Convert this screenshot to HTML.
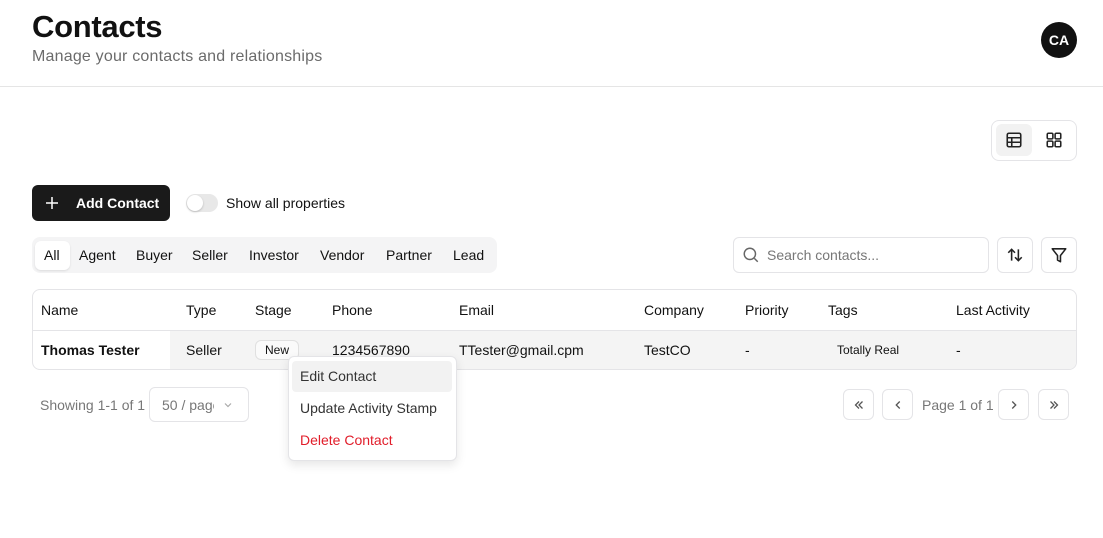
<!DOCTYPE html>
<html><head><style>
*{box-sizing:border-box;margin:0;padding:0}
body{width:1103px;height:538px;background:#fff;font-family:"Liberation Sans",sans-serif;color:#111;position:relative;overflow:hidden}
.a{position:absolute}
.t{font-size:14px;white-space:nowrap}
.btn{position:absolute;border:1px solid #e4e4e7;border-radius:6px;background:#fff;display:flex;align-items:center;justify-content:center}
</style></head><body>
<div class="a" style="left:32px;top:9px;font-size:31px;font-weight:bold;letter-spacing:-0.3px">Contacts</div>
<div class="a" style="left:32px;top:48px;font-size:16px;color:#6b6b6b;letter-spacing:0.2px">Manage your contacts and relationships</div>
<div class="a" style="left:1041px;top:22px;width:36px;height:36px;border-radius:50%;background:#111;color:#fff;font-size:14px;font-weight:bold;display:flex;align-items:center;justify-content:center">CA</div>
<div class="a" style="left:0;top:86px;width:1103px;height:1px;background:#e5e5e5"></div>

<div class="a" style="left:991px;top:120px;width:86px;height:41px;border:1px solid #e4e4e7;border-radius:8px"></div>
<div class="a" style="left:996px;top:124px;width:36px;height:32px;border-radius:6px;background:#f2f2f2"></div>
<svg class="a" style="left:1005px;top:131px" width="18" height="18" viewBox="0 0 16 16" fill="none" stroke="#222" stroke-width="1.4"><rect x="2" y="2" width="12" height="12" rx="1.5"/><path d="M2 6h12M2 10h12M6 6v8"/></svg>
<svg class="a" style="left:1045px;top:131px" width="18" height="18" viewBox="0 0 16 16" fill="none" stroke="#222" stroke-width="1.4"><rect x="2" y="2" width="5" height="5" rx="1"/><rect x="9" y="2" width="5" height="5" rx="1"/><rect x="2" y="9" width="5" height="5" rx="1"/><rect x="9" y="9" width="5" height="5" rx="1"/></svg>

<div class="a" style="left:32px;top:185px;width:138px;height:36px;border-radius:6px;background:#1a1a1a;color:#fff"></div>
<svg class="a" style="left:45px;top:196px" width="14" height="14" viewBox="0 0 14 14" stroke="#fff" stroke-width="1.5"><path d="M7 1v12M1 7h12"/></svg>
<div class="a t" style="left:76px;top:195px;color:#fff;font-weight:bold">Add Contact</div>
<div class="a" style="left:186px;top:194px;width:32px;height:18px;border-radius:9px;background:#e8e8e8"></div>
<div class="a" style="left:187px;top:195px;width:16px;height:16px;border-radius:50%;background:#fff;box-shadow:0 1px 2px rgba(0,0,0,.2)"></div>
<div class="a t" style="left:226px;top:195px">Show all properties</div>

<div class="a" style="left:32px;top:237px;width:465px;height:36px;border-radius:8px;background:#f4f4f5"></div>
<div class="a" style="left:35px;top:241px;width:35px;height:29px;border-radius:6px;background:#fff;box-shadow:0 1px 2px rgba(0,0,0,.1)"></div>
<div class="a t" style="left:44px;top:247px">All</div>
<div class="a t" style="left:79px;top:247px">Agent</div>
<div class="a t" style="left:136px;top:247px">Buyer</div>
<div class="a t" style="left:192px;top:247px">Seller</div>
<div class="a t" style="left:249px;top:247px">Investor</div>
<div class="a t" style="left:320px;top:247px">Vendor</div>
<div class="a t" style="left:386px;top:247px">Partner</div>
<div class="a t" style="left:453px;top:247px">Lead</div>

<div class="btn" style="left:733px;top:237px;width:256px;height:36px;justify-content:flex-start;padding-left:8px">
<svg width="18" height="18" viewBox="0 0 16 16" fill="none" stroke="#666" stroke-width="1.3"><circle cx="7" cy="7" r="5"/><path d="M11 11l3 3"/></svg>
<span class="t" style="margin-left:7px;color:#777">Search contacts...</span></div>
<div class="btn" style="left:997px;top:237px;width:36px;height:36px"><svg width="18" height="18" viewBox="0 0 16 16" fill="none" stroke="#222" stroke-width="1.4"><path d="M5 13V3M2 6l3-3 3 3M11 3v10M8 10l3 3 3-3"/></svg></div>
<div class="btn" style="left:1041px;top:237px;width:36px;height:36px"><svg width="18" height="18" viewBox="0 0 16 16" fill="none" stroke="#222" stroke-width="1.4" stroke-linejoin="round"><path d="M2 2.5h12L9.3 8.5V14L6.7 12.5v-4z"/></svg></div>

<div class="a" style="left:32px;top:289px;width:1045px;height:81px;border:1px solid #e4e4e7;border-radius:8px;overflow:hidden">
<div class="a" style="left:0;top:40px;width:1045px;height:1px;background:#e4e4e7"></div>
<div class="a" style="left:137px;top:41px;width:908px;height:40px;background:#f4f4f4"></div>
</div>
<div class="a t" style="left:41px;top:302px">Name</div>
<div class="a t" style="left:186px;top:302px">Type</div>
<div class="a t" style="left:255px;top:302px">Stage</div>
<div class="a t" style="left:332px;top:302px">Phone</div>
<div class="a t" style="left:459px;top:302px">Email</div>
<div class="a t" style="left:644px;top:302px">Company</div>
<div class="a t" style="left:745px;top:302px">Priority</div>
<div class="a t" style="left:828px;top:302px">Tags</div>
<div class="a t" style="left:956px;top:302px">Last Activity</div>
<div class="a t" style="left:41px;top:342px;font-weight:bold">Thomas Tester</div>
<div class="a t" style="left:186px;top:342px">Seller</div>
<div class="a" style="left:255px;top:340px;width:44px;height:20px;border:1px solid #e0e0e0;border-radius:6px;background:#fafafa;font-size:12px;display:flex;align-items:center;justify-content:center">New</div>
<div class="a t" style="left:332px;top:342px">1234567890</div>
<div class="a t" style="left:459px;top:342px">TTester@gmail.cpm</div>
<div class="a t" style="left:644px;top:342px">TestCO</div>
<div class="a t" style="left:745px;top:342px">-</div>
<div class="a" style="left:837px;top:343px;font-size:12px">Totally Real</div>
<div class="a t" style="left:956px;top:342px">-</div>

<div class="a t" style="left:40px;top:397px;color:#777">Showing 1-1 of 1</div>
<div class="btn" style="left:149px;top:387px;width:100px;height:35px;justify-content:flex-start;padding-left:12px"><span class="t" style="color:#777;width:52px;overflow:hidden">50 / page</span><svg style="margin-left:8px" width="12" height="12" viewBox="0 0 12 12" fill="none" stroke="#aaa" stroke-width="1.2"><path d="M3 4.5l3 3 3-3"/></svg></div>

<div class="btn" style="left:843px;top:389px;width:31px;height:31px"><svg width="14" height="14" viewBox="0 0 12 12" fill="none" stroke="#555" stroke-width="1.1"><path d="M6 3L3 6l3 3M9 3L6 6l3 3"/></svg></div>
<div class="btn" style="left:882px;top:389px;width:31px;height:31px"><svg width="14" height="14" viewBox="0 0 12 12" fill="none" stroke="#555" stroke-width="1.1"><path d="M7.5 3L4.5 6l3 3"/></svg></div>
<div class="a t" style="left:922px;top:397px;color:#777">Page 1 of 1</div>
<div class="btn" style="left:998px;top:389px;width:31px;height:31px"><svg width="14" height="14" viewBox="0 0 12 12" fill="none" stroke="#555" stroke-width="1.1"><path d="M4.5 3l3 3-3 3"/></svg></div>
<div class="btn" style="left:1038px;top:389px;width:31px;height:31px"><svg width="14" height="14" viewBox="0 0 12 12" fill="none" stroke="#555" stroke-width="1.1"><path d="M3 3l3 3-3 3M6 3l3 3-3 3"/></svg></div>

<div class="a" style="left:288px;top:356px;width:169px;height:105px;border:1px solid #e4e4e7;border-radius:6px;background:#fff;box-shadow:0 4px 10px rgba(0,0,0,.1)"></div>
<div class="a" style="left:292px;top:361px;width:160px;height:31px;border-radius:4px;background:#f2f2f2"></div>
<div class="a t" style="left:300px;top:368px;color:#333">Edit Contact</div>
<div class="a t" style="left:300px;top:400px;color:#333">Update Activity Stamp</div>
<div class="a t" style="left:300px;top:432px;color:#e11d2a">Delete Contact</div>
</body></html>
